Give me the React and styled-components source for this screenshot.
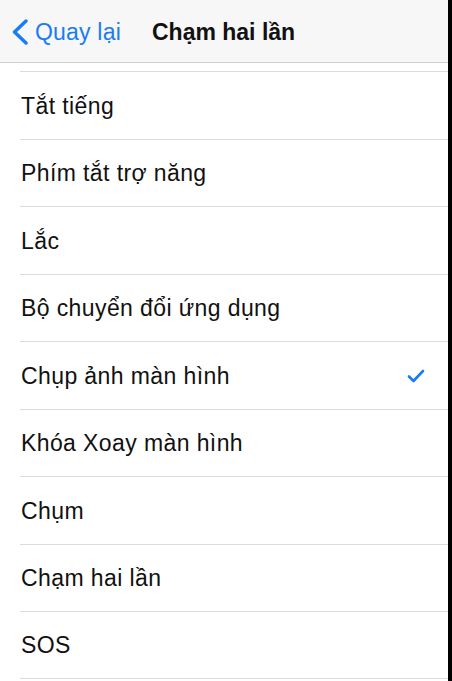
import React from "react";
import styled, { createGlobalStyle } from "styled-components";

const Global = createGlobalStyle`
  html, body { margin: 0; padding: 0; background: #000; }
  body { font-family: "Liberation Sans", Arial, sans-serif; -webkit-font-smoothing: antialiased; }
`;

const Screen = styled.div`
  width: 448px;
  height: 681px;
  background: #fff;
  overflow: hidden;
`;

const NavBar = styled.div`
  height: 63px;
  background: #f7f7f7;
  border-bottom: 1px solid #cfcfcf;
  display: flex;
  align-items: center;
  padding-left: 11px;
  padding-top: 2px;
  box-sizing: border-box;
`;

const Back = styled.div`
  display: flex;
  align-items: center;
  gap: 6px;
  color: #1a7cf3;
  font-size: 23px;
  letter-spacing: 0.2px;
`;

const Title = styled.div`
  margin-left: 31px;
  font-size: 23px;
  font-weight: 700;
  color: #111;
  letter-spacing: 0;
`;

const List = styled.div`
  padding-top: 8px;
`;

const Row = styled.div`
  height: 67.5px;
  box-sizing: border-box;
  margin-left: 20px;
  padding: 2px 23px 0 1px;
  border-top: 1px solid #dcdcdc;
  border-bottom: ${(p) => (p.$last ? "1px solid #dcdcdc" : "none")};
  display: flex;
  align-items: center;
  justify-content: space-between;
  font-size: 23px;
  color: #111;
  letter-spacing: 0.4px;
`;

const Check = () => (
  <svg width="18" height="16" viewBox="0 0 18 16">
    <polyline
      points="2,8.5 6.5,13 16,3"
      fill="none"
      stroke="#1a7cf3"
      strokeWidth="2.6"
      strokeLinecap="round"
      strokeLinejoin="round"
    />
  </svg>
);

const Chevron = () => (
  <svg width="18" height="26" viewBox="0 0 18 26">
    <polyline
      points="15,2 3.5,13 15,24"
      fill="none"
      stroke="#1a7cf3"
      strokeWidth="3.4"
      strokeLinecap="round"
      strokeLinejoin="round"
    />
  </svg>
);

const items = [
  "Tắt tiếng",
  "Phím tắt trợ năng",
  "Lắc",
  "Bộ chuyển đổi ứng dụng",
  "Chụp ảnh màn hình",
  "Khóa Xoay màn hình",
  "Chụm",
  "Chạm hai lần",
  "SOS",
];

export default function App() {
  return (
    <Screen>
      <Global />
      <NavBar>
        <Back>
          <Chevron />
          <span>Quay lại</span>
        </Back>
        <Title>Chạm hai lần</Title>
      </NavBar>
      <List>
        {items.map((t, i) => (
          <Row key={t} $last={i === items.length - 1}>
            <span>{t}</span>
            {t === "Chụp ảnh màn hình" && <Check />}
          </Row>
        ))}
      </List>
    </Screen>
  );
}
